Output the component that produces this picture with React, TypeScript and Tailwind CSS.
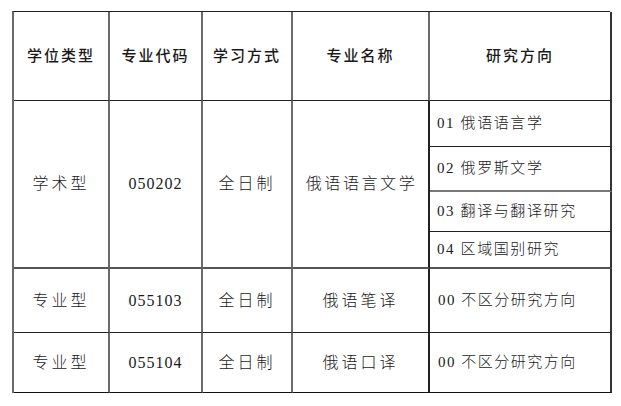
import React from "react";

const cjk = { fontFamily: '"Liberation Serif", "Noto Sans CJK SC", serif' };
const num = { fontFamily: '"Liberation Serif", "Times New Roman", serif' };

const V = "border-r-2 border-r-[#6a6a6a]";

function N({ children }: { children: React.ReactNode }) {
  return <span style={num}>{children}</span>;
}

export default function App() {
  return (
    <div className="w-[621px] h-[406px] bg-white pt-[11px] pl-[12px]" style={cjk}>
      <div className="grid grid-cols-[96px_93px_90px_137px_182px] grid-rows-[89px_46px_45px_40px_37px_64px_60px] border-l-2 border-l-[#6a6a6a] border-t border-t-[#222] w-[598px] text-[#1a1a1a]">
        {/* header */}
        <div className={`${V} border-b border-b-[#222] flex items-center justify-center text-[15px] tracking-[2px] font-medium`}>学位类型</div>
        <div className={`${V} border-b border-b-[#222] flex items-center justify-center text-[15px] tracking-[2px] font-medium`}>专业代码</div>
        <div className={`${V} border-b border-b-[#222] flex items-center justify-center text-[15px] tracking-[2px] font-medium`}>学习方式</div>
        <div className={`${V} border-b border-b-[#222] flex items-center justify-center text-[15px] tracking-[2px] font-medium`}>专业名称</div>
        <div className={`border-r-2 border-r-[#333] border-b border-b-[#222] flex items-center justify-center text-[15px] tracking-[2px] font-medium`}>研究方向</div>

        {/* academic row */}
        <div className={`${V} row-span-4 border-b-2 border-b-[#555] flex items-center justify-center text-[16px] tracking-[3px] font-light`}>学术型</div>
        <div className={`${V} row-span-4 border-b-2 border-b-[#555] flex items-center justify-center text-[16px] tracking-[1px]`}><N>050202</N></div>
        <div className={`${V} row-span-4 border-b-2 border-b-[#555] flex items-center justify-center text-[16px] tracking-[3px] font-light`}>全日制</div>
        <div className={`border-r-2 border-r-[#222] row-span-4 border-b-2 border-b-[#555] flex items-center justify-center pl-[2px] text-[16px] tracking-[2.6px] font-light`}>俄语语言文学</div>
        <div className="border-r-2 border-r-[#333] border-b border-b-[#222] flex items-center pl-[7px] text-[15px] tracking-[1.6px] font-light"><N>01</N>&nbsp;俄语语言学</div>
        <div className="border-r-2 border-r-[#333] border-b-2 border-b-[#777] flex items-center pl-[7px] text-[15px] tracking-[1.6px] font-light"><N>02</N>&nbsp;俄罗斯文学</div>
        <div className="border-r-2 border-r-[#333] border-b border-b-[#222] flex items-center pl-[7px] text-[15px] tracking-[1.6px] font-light"><N>03</N>&nbsp;翻译与翻译研究</div>
        <div className="border-r-2 border-r-[#333] border-b-2 border-b-[#555] flex items-center pl-[7px] text-[15px] tracking-[1.6px] font-light"><N>04</N>&nbsp;区域国别研究</div>

        {/* professional 1 */}
        <div className={`${V} border-b border-b-[#222] flex items-center justify-center text-[16px] tracking-[3px] font-light`}>专业型</div>
        <div className={`${V} border-b border-b-[#222] flex items-center justify-center text-[16px] tracking-[1px]`}><N>055103</N></div>
        <div className={`${V} border-b border-b-[#222] flex items-center justify-center text-[16px] tracking-[3px] font-light`}>全日制</div>
        <div className={`border-r-2 border-r-[#222] border-b border-b-[#222] flex items-center justify-center text-[16px] tracking-[3px] font-light`}>俄语笔译</div>
        <div className="border-r-2 border-r-[#333] border-b border-b-[#222] flex items-center pl-[8px] text-[15px] tracking-[1.5px] font-light"><N>00</N>&nbsp;不区分研究方向</div>

        {/* professional 2 */}
        <div className={`${V} border-b border-b-[#111] flex items-center justify-center text-[16px] tracking-[3px] font-light`}>专业型</div>
        <div className={`${V} border-b border-b-[#111] flex items-center justify-center text-[16px] tracking-[1px]`}><N>055104</N></div>
        <div className={`${V} border-b border-b-[#111] flex items-center justify-center text-[16px] tracking-[3px] font-light`}>全日制</div>
        <div className={`border-r-2 border-r-[#222] border-b border-b-[#111] flex items-center justify-center text-[16px] tracking-[3px] font-light`}>俄语口译</div>
        <div className="border-r-2 border-r-[#333] border-b border-b-[#111] flex items-center pl-[8px] text-[15px] tracking-[1.5px] font-light"><N>00</N>&nbsp;不区分研究方向</div>
      </div>
    </div>
  );
}
